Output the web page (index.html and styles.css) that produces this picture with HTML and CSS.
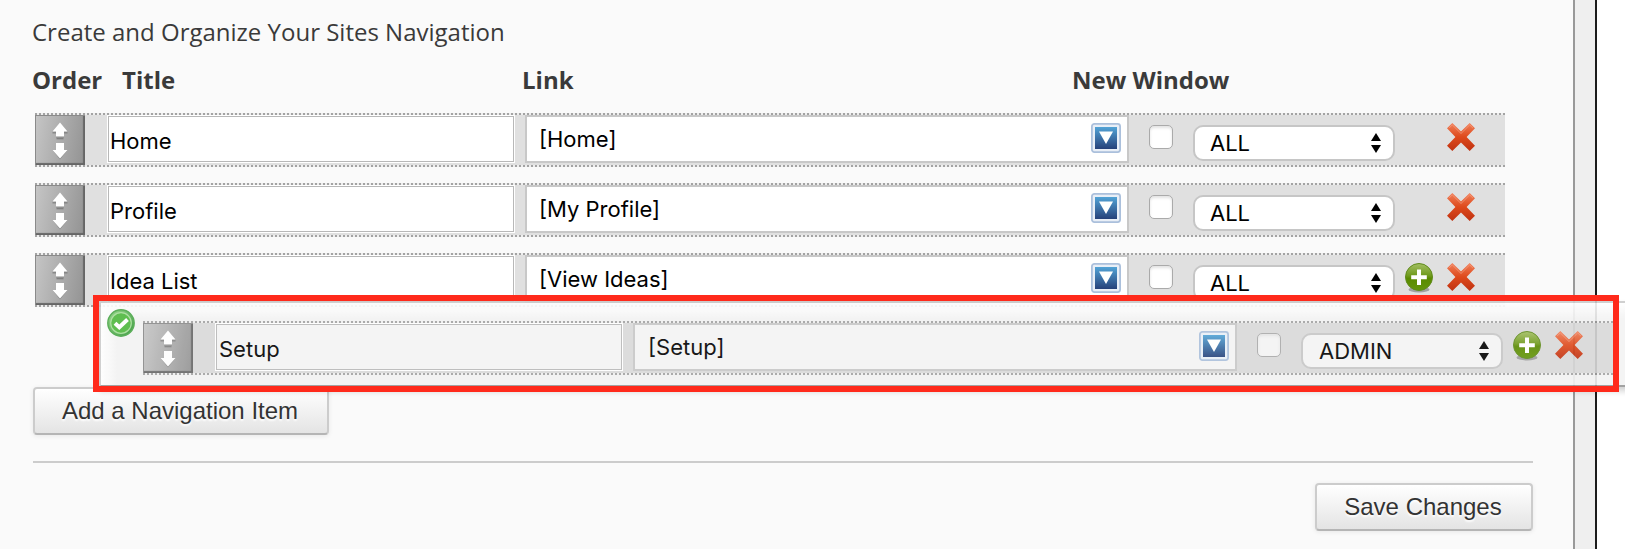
FILE: index.html
```html
<!DOCTYPE html>
<html lang="en">
<head>
<meta charset="utf-8">
<title>Navigation</title>
<link rel="stylesheet" href="styles.css">
</head>
<body>
<svg class="defs" width="0" height="0" aria-hidden="true">
  <defs>
    <linearGradient id="gRed" x1="0" y1="0" x2="0" y2="1"><stop offset="0" stop-color="#f0805a"/><stop offset=".5" stop-color="#de4a1c"/><stop offset="1" stop-color="#bf3212"/></linearGradient>
    <linearGradient id="gGreen" x1="0" y1="0" x2="0" y2="1"><stop offset="0" stop-color="#a3bf63"/><stop offset=".45" stop-color="#6f9a1c"/><stop offset=".55" stop-color="#5a8a00"/><stop offset="1" stop-color="#64960a"/></linearGradient>
    <linearGradient id="gBlue" x1="0" y1="0" x2="0" y2="1"><stop offset="0" stop-color="#52a3d6"/><stop offset="1" stop-color="#26417a"/></linearGradient>
    <linearGradient id="gCheck" x1="0" y1="0" x2="1" y2="1"><stop offset="0" stop-color="#8ed480"/><stop offset="1" stop-color="#2c9130"/></linearGradient>
    <symbol id="sort" viewBox="0 0 50 50">
      <path d="M17.500 16.500h15v2h-3.500v4h-8v-4h-3.500z M17.500 35l7.500 9.500 7.500-9.500z" fill="#777" opacity=".7"/>
      <path d="M25 7.500l7.500 9h-3.500v5h-8v-5h-3.500z M21 28h8v7h3.500L25 43.500 17.500 35h3.500z" fill="#fff"/>
      <path d="M21.500 23.500h7" stroke="#808080" stroke-width="1.600"/>
    </symbol>
    <symbol id="drop" viewBox="0 0 30 30">
      <rect x=".9" y=".9" width="28.200" height="28.200" rx="2.500" fill="#e9eff7" stroke="#abc0dc" stroke-width="1.800"/>
      <rect x="4" y="4" width="22" height="22" fill="url(#gBlue)"/>
      <path d="M8 8.500h14L15 21z" fill="#fff"/>
    </symbol>
    <symbol id="del" viewBox="0 0 28 28">
      <path d="M5.300 0L14 8.500 22.700 0 28 5.300 19.600 14l8.400 8.700-5.300 5.300L14 19.600 5.300 28 0 22.700 8.400 14 0 5.300z" fill="url(#gRed)"/>
      <path d="M2 5.200l3.300-3.300 8.700 8.600 8.700-8.600L26 5.200" fill="none" stroke="#f6a183" stroke-width="1" opacity=".7"/>
    </symbol>
    <symbol id="add" viewBox="0 0 28 30">
      <ellipse cx="14" cy="26.500" rx="10.500" ry="3" fill="#555" opacity=".45"/>
      <circle cx="14" cy="14" r="13.500" fill="url(#gGreen)" stroke="#5f8a1c" stroke-width="1"/>
      <path d="M14 6.500v15.500M6.200 14.300h15.600" stroke="#fff" stroke-width="4"/>
    </symbol>
    <symbol id="ok" viewBox="0 0 28 28">
      <circle cx="14" cy="14" r="13.200" fill="url(#gCheck)" stroke="#4aa648" stroke-width="1.400"/>
      <circle cx="14" cy="14" r="10.300" fill="#4fb83e" stroke="#a5dd98" stroke-width="1.200"/>
      <path d="M8 14.200l4.300 4L20.500 10.500" fill="none" stroke="#fff" stroke-width="4"/>
    </symbol>
    <symbol id="updown" viewBox="0 0 10 20"><path d="M5 0l5 8H0z M0 12h10L5 20z" fill="currentColor"/></symbol>
  </defs>
</svg>
<div class="page">
  <main class="panel">
    <p class="intro">Create and Organize Your Sites Navigation</p>
    <div class="heads"><span>Order</span><span>Title</span><span class="h-link">Link</span><span>New Window</span></div>
    <div class="rows">
      <div class="row">
        <div class="handle"><svg width="50" height="50"><use href="#sort"/></svg></div>
        <div class="title">Home</div>
        <div class="link"><span>[Home]</span><svg width="30" height="30"><use href="#drop"/></svg></div>
        <div class="check"></div>
        <div class="select"><span>ALL</span><svg width="10" height="20"><use href="#updown"/></svg></div>
        <svg class="del" width="28" height="28"><use href="#del"/></svg>
      </div>
      <div class="row">
        <div class="handle"><svg width="50" height="50"><use href="#sort"/></svg></div>
        <div class="title">Profile</div>
        <div class="link"><span>[My Profile]</span><svg width="30" height="30"><use href="#drop"/></svg></div>
        <div class="check"></div>
        <div class="select"><span>ALL</span><svg width="10" height="20"><use href="#updown"/></svg></div>
        <svg class="del" width="28" height="28"><use href="#del"/></svg>
      </div>
      <div class="row">
        <div class="handle"><svg width="50" height="50"><use href="#sort"/></svg></div>
        <div class="title">Idea List</div>
        <div class="link"><span>[View Ideas]</span><svg width="30" height="30"><use href="#drop"/></svg></div>
        <div class="check"></div>
        <div class="select"><span>ALL</span><svg width="10" height="20"><use href="#updown"/></svg></div>
        <svg class="add" width="28" height="30"><use href="#add"/></svg>
        <svg class="del" width="28" height="28"><use href="#del"/></svg>
      </div>
    </div>
    <div class="button add-item">Add a Navigation Item</div>
    <div class="footer"><div class="button save">Save Changes</div></div>
  </main>
  <div class="gutter"></div>
  <div class="drag">
    <svg class="ok" width="28" height="28"><use href="#ok"/></svg>
    <div class="row">
      <div class="handle"><svg width="50" height="50"><use href="#sort"/></svg></div>
      <div class="title">Setup</div>
      <div class="link"><span>[Setup]</span><svg width="30" height="30"><use href="#drop"/></svg></div>
      <div class="check"></div>
      <div class="select"><span>ADMIN</span><svg width="10" height="20"><use href="#updown"/></svg></div>
      <svg class="add" width="28" height="30"><use href="#add"/></svg>
      <svg class="del" width="28" height="28"><use href="#del"/></svg>
    </div>
  </div>
  <div class="frame"></div>
</div>
</body>
</html>
```
FILE: styles.css
```css
* { box-sizing: border-box; }
body { margin: 0; background: #fff; font-family: Inter, "Liberation Sans", sans-serif; }
svg { display: block; flex: none; }
.defs { position: absolute; }
.page { position: relative; display: flex; width: 1625px; height: 549px; overflow: hidden; }
.panel { width: 1573px; height: 549px; padding: 15px 40px 0 33px; background: #fafafa; }
.gutter { width: 24px; background: #efefef; border-left: 2px solid #999; border-right: 2px solid #1c1c1c; }
.intro, .heads { margin: 0 0 0 -1px; font-family: "Open Sans", sans-serif; color: #3a3a3a; white-space: nowrap; }
.intro { height: 48px; font-size: 24px; line-height: 34px; }
.heads { display: grid; grid-template-columns: 90px 399px 551px auto; height: 50px; font-size: 24px; line-height: 34px; font-weight: 700; }
.h-link { padding-left: 1px; }
.rows { display: flex; flex-direction: column; gap: 16px; padding-left: 2px; }
.row {
  display: flex; align-items: flex-start; width: 1470px; height: 54px; padding: 2px 0;
  background:
    repeating-linear-gradient(90deg, #a3a3a3 0 2px, #eee 2px 4px) 0 0 / 100% 2px no-repeat,
    repeating-linear-gradient(90deg, #a3a3a3 0 2px, #eee 2px 4px) 0 100% / 100% 2px no-repeat,
    #e0e0e0;
}
.handle {
  width: 50px; height: 50px; flex: none;
  background: linear-gradient(100deg, #c6c6c6, #929292);
  box-shadow: inset 1px 1px 0 #8a8a8a, inset -2px -2px 1px #666;
}
.title {
  flex: none; width: 408px; height: 48px; margin-left: 22px; padding-left: 2px;
  border: 1px solid #fff; box-shadow: inset 0 0 0 1px #b8b8b8; background: #fff;
  color: #000; font-size: 22px; line-height: 51px;
}
.link {
  flex: none; display: flex; justify-content: space-between; align-items: flex-start;
  width: 604px; height: 48px; margin-left: 10px; padding: 6px 6px 0 12px;
  border: 2px solid #c8c8c8; background: #fff; color: #000; font-size: 22px; line-height: 32px;
}
.check {
  flex: none; width: 24px; height: 24px; margin: 10px 0 0 20px; border: 1px solid #aaa; border-radius: 5px;
  background: #fff; box-shadow: inset 0 2px 3px #e2e2e2;
}
.select {
  flex: none; display: flex; justify-content: space-between; align-items: center;
  width: 202px; height: 36px; margin: 10px 0 0 20px; padding: 0 12px 0 15px;
  border: 2px solid #c6c6c6; border-radius: 10px; background: #fff; color: #000; font-size: 22px;
}
.add { margin: 8px 0 0 10px; }
.del { margin: 8px 30px 0 auto; }
.button {
  height: 48px; border: 2px solid #ccc; border-bottom-color: #b5b5b5; border-radius: 4px; padding-right: 2px;
  background: linear-gradient(#fff, #e4e4e4); box-shadow: 0 1px 5px rgba(0,0,0,.08);
  color: #333; font: 24px/44px "Liberation Sans", Arial, sans-serif; text-align: center; text-shadow: 0 2px 2px #fff; white-space: nowrap;
}
.add-item { width: 296px; margin-top: 80px; }
.footer { margin-top: 26px; padding-top: 20px; border-top: 2px solid #ccc; display: flex; justify-content: flex-end; }
.save { width: 218px; }
.drag {
  position: absolute; left: 99px; top: 301px; width: 1600px; height: 86px; padding: 18px 0 0 42px; opacity: .9;
  border-top: 2px solid #ccc; border-left: 2px solid #ccc; border-bottom: 2px solid #999;
  background: linear-gradient(#fff, rgba(255,255,255,0) 16px), linear-gradient(90deg, #fff, #f3f3f3 16px);
  box-shadow: 0 4px 6px rgba(0,0,0,.2);
}
.drag .row { background-color: #d9d9d9; }
.drag .title { padding-left: 3px; }
.drag .title, .drag .link, .drag .select, .drag .check { background: #f4f4f4; }
.drag .link { padding-left: 13px; }
.drag .select { padding-left: 16px; }
.ok { position: absolute; left: 6px; top: 6px; }
.frame { position: absolute; left: 93px; top: 295px; width: 1526px; height: 97px; border: 6px solid #ff2a1b; }
```
